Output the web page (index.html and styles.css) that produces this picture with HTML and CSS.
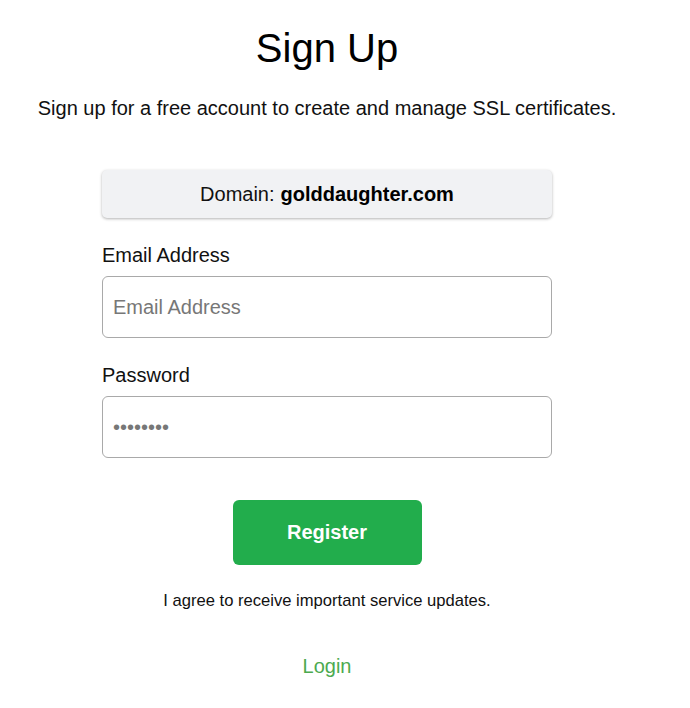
FILE: index.html
```html
<!DOCTYPE html>
<html lang="en">
<head>
<meta charset="utf-8">
<title>Sign Up</title>
<link rel="stylesheet" href="styles.css">
</head>
<body>
<main class="page">
  <h1 class="title">Sign Up</h1>
  <p class="intro">Sign up for a free account to create and manage SSL certificates.</p>
  <form class="form">
    <div class="domain">Domain: <strong>golddaughter.com</strong></div>
    <label class="label" for="email">Email Address</label>
    <input class="input" id="email" type="email" placeholder="Email Address">
    <label class="label" for="pw">Password</label>
    <input class="input" id="pw" type="password" value="password">
    <div class="actions">
      <button class="btn" type="button">Register</button>
    </div>
    <p class="agree">I agree to receive important service updates.</p>
    <a class="login" href="#">Login</a>
  </form>
</main>
</body>
</html>
```
FILE: styles.css
```css
* { box-sizing: border-box; }
html, body { margin: 0; padding: 0; background: #fff; }
body {
  font-family: "Liberation Sans", Arial, sans-serif;
  color: #111;
}
.page {
  width: 654px;
  display: flex;
  flex-direction: column;
  align-items: center;
}
.title {
  margin: 25px 0 0;
  font-size: 40px;
  font-weight: normal;
  line-height: 46px;
  color: #000;
}
.intro {
  margin: 25px 0 0;
  font-size: 20px;
  line-height: 24px;
}
.form {
  width: 450px;
  margin-top: 50px;
  display: flex;
  flex-direction: column;
}
.domain {
  height: 48px;
  background: #f1f2f4;
  border-radius: 5px;
  box-shadow: 0 1px 3px rgba(0,0,0,0.3);
  display: flex;
  align-items: center;
  justify-content: center;
  font-size: 20px;
  color: #111;
}
.domain strong { margin-left: 6px; color: #000; }
.label {
  margin-top: 25px;
  font-size: 20px;
  line-height: 24px;
  color: #111;
}
.input {
  margin-top: 9px;
  height: 62px;
  width: 100%;
  border: 1px solid #a9a9a9;
  border-radius: 6px;
  padding: 0 10px;
  font-family: "Liberation Sans", Arial, sans-serif;
  font-size: 20px;
  color: #777;
}
.input::placeholder { color: #777; }
.actions {
  display: flex;
  justify-content: center;
  margin-top: 42px;
}
.btn {
  width: 189px;
  height: 65px;
  border: 0;
  border-radius: 6px;
  background: #22ad4c;
  color: #fff;
  font-family: "Liberation Sans", Arial, sans-serif;
  font-size: 20px;
  font-weight: bold;
}
.agree {
  margin: 26px 0 0;
  text-align: center;
  font-size: 16.6px;
  line-height: 20px;
  color: #111;
}
.login {
  margin-top: 44px;
  align-self: center;
  color: #4caa4f;
  font-size: 20px;
  text-decoration: none;
}
```
